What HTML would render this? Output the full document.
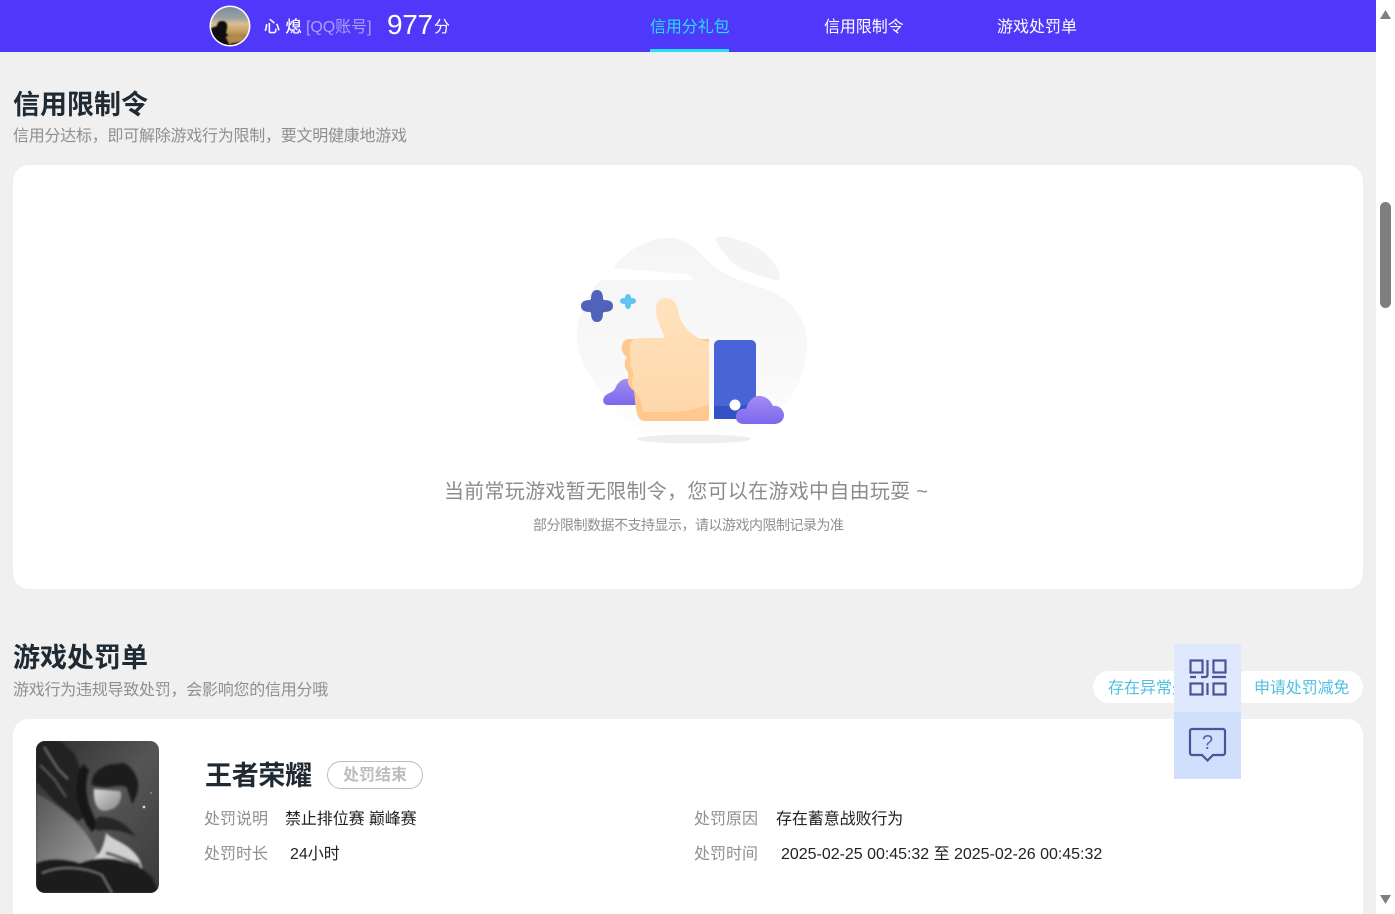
<!DOCTYPE html>
<html><head><meta charset="utf-8"><style>
html,body{margin:0;padding:0;width:1395px;height:914px;overflow:hidden;background:#f0f0f0}
body{position:relative;font-family:"Liberation Sans","Noto Sans CJK SC",sans-serif}
.t{position:absolute;white-space:nowrap;line-height:24px;height:24px}
.b{position:absolute}
</style></head><body>
<div class="b" style="left:0;top:0;width:1376px;height:52px;background:#5038fa"></div>
<svg class="b" style="left:209px;top:5px" width="42" height="42" viewBox="0 0 42 42"><defs><clipPath id="a"><circle cx="21" cy="21" r="19"/></clipPath><linearGradient id="s" x1="0" y1="0" x2="0" y2="1"><stop offset="0" stop-color="#76879b"/><stop offset=".3" stop-color="#98a0a4"/><stop offset=".45" stop-color="#d8c08e"/><stop offset=".65" stop-color="#c49a5c"/><stop offset="1" stop-color="#4a3820"/></linearGradient><filter id="f1"><feGaussianBlur stdDeviation=".7"/></filter></defs><circle cx="21" cy="21" r="20.500" fill="#fff"/><g clip-path="url(#a)"><rect width="42" height="42" fill="url(#s)"/><g filter="url(#f1)"><path d="M0 42V24l8-3c0-3 2-5 5-5 4 0 6 3 5 7l-1 5 6 6 4 8z" fill="#100d0c"/><path d="M17 32c5-3 11-3 16-1l4 5-6 6H22z" fill="#b08a4c"/><path d="M22 38l16-2v6H20z" fill="#231a10"/></g></g></svg>
<div class="t" style="left:264px;top:16px;font-size:16px;color:#fff;letter-spacing:.5px;-webkit-text-stroke:.3px #fff">心 熄</div>
<div class="t" style="left:306px;top:16px;font-size:16px;color:#a9a0f5;letter-spacing:-.05px">[QQ账号]</div>
<div class="t" style="left:387px;top:9px;font-size:28px;color:#fff;line-height:32px;height:32px;letter-spacing:-.3px">977</div>
<div class="t" style="left:434px;top:16px;font-size:16px;color:#fff">分</div>
<div class="t" style="left:650px;top:16px;font-size:16px;color:#25e0f0;letter-spacing:-.1px">信用分礼包</div>
<div class="b" style="left:650px;top:49px;width:79px;height:3px;background:#25e0f0"></div>
<div class="t" style="left:824px;top:16px;font-size:16px;color:#fff;letter-spacing:-.1px">信用限制令</div>
<div class="t" style="left:997px;top:16px;font-size:16px;color:#fff">游戏处罚单</div>

<div class="t" style="left:13px;top:87px;font-size:27px;font-weight:700;color:#1f2a33;line-height:36px;height:36px">信用限制令</div>
<div class="t" style="left:13px;top:125px;font-size:16px;color:#8f8f8f;letter-spacing:-.25px">信用分达标，即可解除游戏行为限制，要文明健康地游戏</div>
<div class="b" style="left:13px;top:165px;width:1350px;height:424px;background:#fff;border-radius:16px"></div>

<svg class="b" style="left:560px;top:225px" width="260" height="230" viewBox="0 0 260 230">
<defs>
<linearGradient id="bg" x1="0" y1="0" x2="0" y2="1"><stop offset="0" stop-color="#f5f5f6"/><stop offset=".6" stop-color="#f8f8f9"/><stop offset="1" stop-color="#fff"/></linearGradient>
<linearGradient id="cl" x1="0" y1="0" x2="0" y2="1"><stop offset="0" stop-color="#a48cf2"/><stop offset="1" stop-color="#7b67ee"/></linearGradient>
<linearGradient id="h" x1="0" y1="0" x2="0" y2="1"><stop offset="0" stop-color="#ffe2bd"/><stop offset="1" stop-color="#ffd8aa"/></linearGradient>
</defs>
<path d="M53 43C68 24 90 12 110 13c20 1 30 16 42 27 14 12 34 17 54 24 24 9 41 28 41 54 0 36-20 70-52 88-20 11-40 16-64 16-34 0-64-18-86-50C28 150 16 130 17 108c1-26 16-48 36-65z" fill="url(#bg)"/>
<path d="M53 43l73 6c5 1 7 4 6 6H40z" fill="#fff"/>
<path d="M155 13c4-3 18-1 30 4 16 6 28 16 34 30 2 6 1 9-3 8-16-4-34-8-46-20-6-7-13-15-15-22z" fill="#f4f4f5"/>
<ellipse cx="134" cy="214" rx="57" ry="4.500" fill="#eeeeee"/>
<path d="M37 65c4 0 6 3 6 9l1 1c6 0 9 2 9 6s-3 6-9 6l-1 1c0 6-2 9-6 9s-6-3-6-9l-1-1c-6 0-9-2-9-6s3-6 9-6l1-1c0-6 2-9 6-9z" fill="#5062ba"/>
<path d="M68 69c2 0 3 2 3 4 3 0 5 1 5 3s-2 3-5 3c0 3-1 5-3 5s-3-2-3-5c-3 0-5-1-5-3s2-3 5-3c0-2 1-4 3-4z" fill="#62c3f0"/>
<path d="M48 180c-6 0-6-7-2-10 3-2 7-3 9-6 2-6 7-11 13-10 6 0 9 5 9 10v16z" fill="url(#cl)"/>
<path d="M78 114H68c-5 1-7 6-6 11 1 4 3 6 5 7-3 4-3 9-1 12 2 3 3 5 2 9-1 6 2 10 6 13 1 6 1 12 2 18 1 6 3 12 8 12h62c2 0 3-1 3-3V114z" fill="#ffc88e"/>
<path d="M96 84c0-7 4-11 10-11 7 0 11 5 12 12 1 8 5 15 11 21 6 6 12 9 20 11v62c-12 6-28 8-42 8H84c-3-7-3-13-7-18-3-4-6-8-5-13 1-4 2-8 0-12-2-3-2-6-1-9-2-5-2-12 1-20 3-1 7-2 10-2h20c2 0 3-1 2-3-4-8-8-18-8-26z" fill="url(#h)"/>
<rect x="154" y="115" width="42" height="79" rx="5" fill="#4864d6"/>
<path d="M154 181h20l22-2v10c0 3-2 5-5 5h-37z" fill="#3451c3"/>
<circle cx="175" cy="180" r="5.500" fill="#fff"/>
<path d="M184 199c-6 0-9-4-8-9 1-5 6-7 10-6 2-7 7-14 15-13 6 1 10 5 12 10 7-1 11 5 11 9 0 6-5 9-10 9z" fill="url(#cl)"/>
</svg>

<div class="t" style="left:444px;top:480px;font-size:20px;color:#8c8c8c;letter-spacing:.28px">当前常玩游戏暂无限制令，您可以在游戏中自由玩耍 ~</div>
<div class="t" style="left:533px;top:513px;font-size:14px;color:#8f8f8f;letter-spacing:-.5px">部分限制数据不支持显示，请以游戏内限制记录为准</div>

<div class="t" style="left:13px;top:640px;font-size:27px;font-weight:700;color:#1f2a33;line-height:36px;height:36px">游戏处罚单</div>
<div class="t" style="left:13px;top:679px;font-size:16px;color:#8f8f8f;letter-spacing:-.25px">游戏行为违规导致处罚，会影响您的信用分哦</div>

<div class="b" style="left:1093px;top:671px;width:120px;height:32px;background:#fff;border-radius:16px"></div>
<div class="t" style="left:1108px;top:677px;font-size:16px;color:#4fc0e0">存在异常处罚</div>
<div class="b" style="left:1230px;top:671px;width:133px;height:32px;background:#fff;border-radius:16px"></div>
<div class="t" style="left:1254px;top:677px;font-size:16px;color:#4fc0e0;letter-spacing:-.1px">申请处罚减免</div>

<div class="b" style="left:13px;top:719px;width:1350px;height:195px;background:#fff;border-radius:16px 16px 0 0"></div>

<svg class="b" style="left:36px;top:741px" width="123" height="152" viewBox="0 0 123 152">
<defs><clipPath id="c"><rect width="123" height="152" rx="9"/></clipPath><linearGradient id="g" x1="0" y1="0" x2="1" y2="1"><stop offset="0" stop-color="#2c2c2c"/><stop offset=".5" stop-color="#555"/><stop offset="1" stop-color="#3a3a3a"/></linearGradient><linearGradient id="rb" x1="0" y1="0" x2="1" y2="1"><stop offset="0" stop-color="#555"/><stop offset=".7" stop-color="#8c8c8c"/><stop offset="1" stop-color="#aaa"/></linearGradient><linearGradient id="fc" x1="0" y1="0" x2="1" y2="1"><stop offset="0" stop-color="#d8d8d8"/><stop offset="1" stop-color="#888"/></linearGradient><filter id="f2" x="-5%" y="-5%" width="110%" height="110%"><feGaussianBlur stdDeviation="1"/></filter></defs>
<g clip-path="url(#c)"><rect width="123" height="152" fill="url(#g)"/>
<g filter="url(#f2)">
<path d="M0 52c15 8 35 22 48 38 8 10 14 22 18 34l-30 10H0z" fill="url(#rb)"/>
<path d="M0 0h24l14 12 10 24 2 18-6 12 8 8-10 6L22 64 0 40z" fill="#222"/>
<path d="M8 6l14 22 10 10" stroke="#666" stroke-width="2" fill="none"/>
<path d="M4 24l14 14 12 18" stroke="#555" stroke-width="2" fill="none"/>
<path d="M47 23c-6 10-8 24-5 38l8 22 6 8 6-6-8-18c-5-14-5-28-1-38z" fill="#161616"/>
<path d="M58 48l26 2c3 4 0 14-6 17-5 3-11 4-15 1-4-4-6-12-5-20z" fill="url(#fc)"/>
<path d="M56 44c-2-12 12-22 26-21 8-4 17 6 20 18 1 8-2 16-6 22-2-7-3-10-5-16-3-3-8-2-12-2-8 2-15 1-23-1z" fill="#1a1a1a"/>
<path d="M62 76c16-2 30 8 38 20-12-6-26-9-38-6-4-3-4-10 0-14z" fill="#282828"/>
<path d="M70 92c6 6 14 8 22 14 8 6 14 14 14 22l-8 4-24-10-14 4c-2-2-4-4-6-6 10-4 14-16 16-28z" fill="#d0d0d0"/>
<path d="M0 122c14-6 32-4 44 0 10-4 22-6 36-4l22 6 14 12 7 16H0z" fill="#1e1e1e"/>
<path d="M6 132c20-8 42-6 60 2l10 18" stroke="#777" stroke-width="1.500" fill="none"/>
<path d="M70 112c10 2 22 8 34 12" stroke="#555" stroke-width="3" fill="none"/>
</g>
<circle cx="108" cy="66" r="1.400" fill="#ddd"/><circle cx="115" cy="52" r="1" fill="#888"/>
</g></svg>

<div class="t" style="left:205px;top:759px;font-size:27px;font-weight:700;color:#1f2a33;line-height:34px;height:34px;letter-spacing:-.3px">王者荣耀</div>
<div class="b" style="left:327px;top:761px;width:94px;height:26px;border:1px solid #bdbdbd;border-radius:14px"></div>
<div class="t" style="left:343px;top:764px;font-size:16px;font-weight:700;color:#bdbdbd">处罚结束</div>

<div class="t" style="left:204px;top:808px;font-size:16px;color:#8f8f8f">处罚说明</div>
<div class="t" style="left:285px;top:808px;font-size:16px;color:#222;letter-spacing:-.1px">禁止排位赛 巅峰赛</div>
<div class="t" style="left:204px;top:843px;font-size:16px;color:#8f8f8f">处罚时长</div>
<div class="t" style="left:290px;top:843px;font-size:16px;color:#222">24小时</div>
<div class="t" style="left:694px;top:808px;font-size:16px;color:#8f8f8f">处罚原因</div>
<div class="t" style="left:776px;top:808px;font-size:16px;color:#222;letter-spacing:-.1px">存在蓄意战败行为</div>
<div class="t" style="left:694px;top:843px;font-size:16px;color:#8f8f8f">处罚时间</div>
<div class="t" style="left:781px;top:843px;font-size:16px;color:#222;letter-spacing:-.02px">2025-02-25 00:45:32 至 2025-02-26 00:45:32</div>

<div class="b" style="left:1174px;top:644px;width:67px;height:68px;background:#e0e8fd"></div>
<div class="b" style="left:1174px;top:712px;width:67px;height:67px;background:#d0dffc"></div>
<svg class="b" style="left:1174px;top:644px" width="67" height="135" viewBox="0 0 67 135" fill="none" stroke="#4a5496" stroke-width="2.200">
<rect x="16.500" y="16.500" width="12" height="12"/><rect x="39.500" y="16.500" width="12" height="12"/>
<rect x="16.500" y="39.500" width="12" height="11"/><rect x="39.500" y="39.500" width="12" height="11"/>
<path d="M33.500 16v15a2 2 0 0 1-2 2H27M16 33h6M38 33h14M33.500 39v12"/>
<path d="M18 85h31a2 2 0 0 1 2 2v22a2 2 0 0 1-2 2H39l-5.500 5.500-5.500-5.500H18a2 2 0 0 1-2-2V87a2 2 0 0 1 2-2z"/>
<text x="33.500" y="105" font-size="20" text-anchor="middle" fill="#5a64a0" stroke="none" font-family="Liberation Sans">?</text>
</svg>

<div class="b" style="left:1376px;top:0;width:19px;height:914px;background:#fff"></div>
<svg class="b" style="left:1376px;top:0" width="19" height="914" viewBox="0 0 19 914"><path d="M4 19l5.500-9 5.500 9zM4 895l5.500 9 5.500-9z" fill="#7f7f7f"/><rect x="4" y="202" width="11" height="106" rx="5.500" fill="#7f7f7f"/></svg>
</body></html>
